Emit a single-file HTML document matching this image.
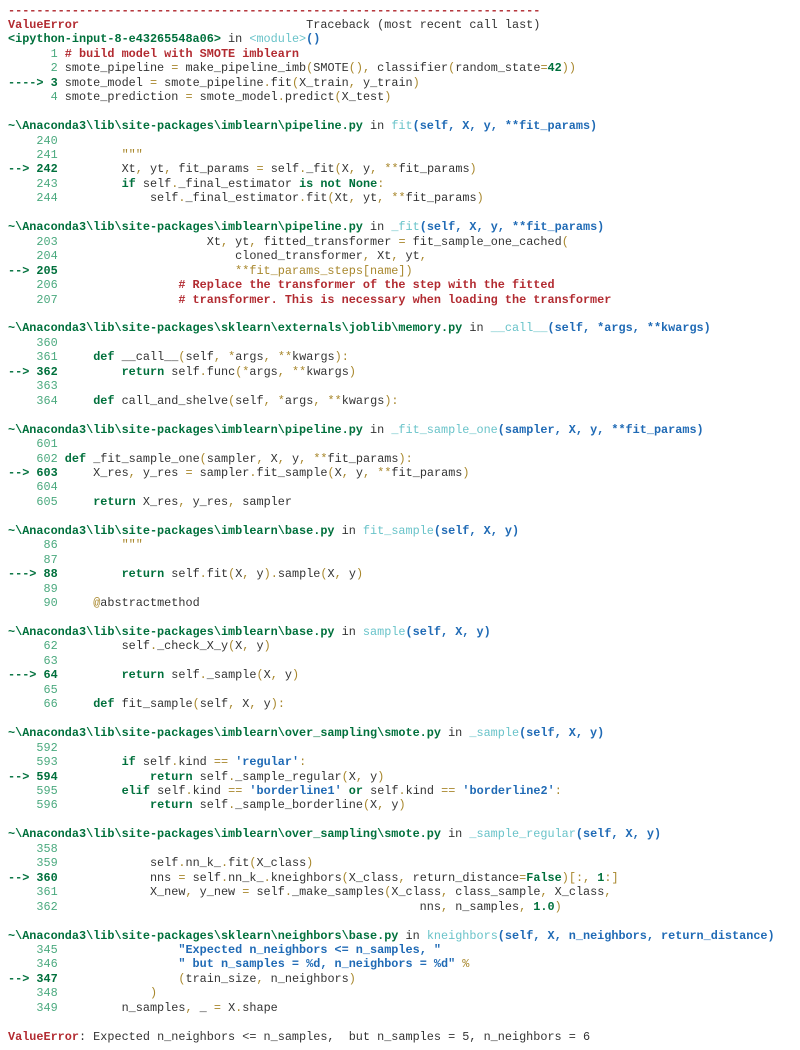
<!DOCTYPE html>
<html><head><meta charset="utf-8"><style>
html,body{margin:0;padding:0;background:#fff;width:800px;height:1050px;overflow:hidden}
pre{margin:0;position:absolute;left:8px;top:3.5px;font-family:"Liberation Mono",monospace;font-size:11.83px;line-height:14.46px;color:#333;white-space:pre}
.r{color:#b22b31;font-weight:bold}
.g{color:#00703c;font-weight:bold}
.n{color:#4aa97e}
.b{color:#1f6ab5;font-weight:bold}
.c{color:#69c3c9}
.o{color:#a8872c}
.a{color:#00703c;font-weight:bold}
</style></head><body><pre><span class="r">---------------------------------------------------------------------------</span>
<span class="r">ValueError</span>                                Traceback (most recent call last)
<span class="g">&lt;ipython-input-8-e43265548a06&gt;</span> in <span class="c">&lt;module&gt;</span><span class="b">()</span>
<span class="n">      1</span> <span class="r"># build model with SMOTE imblearn</span>
<span class="n">      2</span> smote_pipeline <span class="o">=</span> make_pipeline_imb<span class="o">(</span>SMOTE<span class="o">(),</span> classifier<span class="o">(</span>random_state<span class="o">=</span><span class="a">42</span><span class="o">))</span>
<span class="a">----&gt; 3</span> smote_model <span class="o">=</span> smote_pipeline<span class="o">.</span>fit<span class="o">(</span>X_train<span class="o">,</span> y_train<span class="o">)</span>
<span class="n">      4</span> smote_prediction <span class="o">=</span> smote_model<span class="o">.</span>predict<span class="o">(</span>X_test<span class="o">)</span>

<span class="g">~\Anaconda3\lib\site-packages\imblearn\pipeline.py</span> in <span class="c">fit</span><span class="b">(self, X, y, **fit_params)</span>
<span class="n">    240</span> 
<span class="n">    241</span>         <span class="o">"""</span>
<span class="a">--&gt; 242</span>         Xt<span class="o">,</span> yt<span class="o">,</span> fit_params <span class="o">=</span> self<span class="o">.</span>_fit<span class="o">(</span>X<span class="o">,</span> y<span class="o">,</span> <span class="o">**</span>fit_params<span class="o">)</span>
<span class="n">    243</span>         <span class="a">if</span> self<span class="o">.</span>_final_estimator <span class="a">is</span> <span class="a">not</span> <span class="a">None</span><span class="o">:</span>
<span class="n">    244</span>             self<span class="o">.</span>_final_estimator<span class="o">.</span>fit<span class="o">(</span>Xt<span class="o">,</span> yt<span class="o">,</span> <span class="o">**</span>fit_params<span class="o">)</span>

<span class="g">~\Anaconda3\lib\site-packages\imblearn\pipeline.py</span> in <span class="c">_fit</span><span class="b">(self, X, y, **fit_params)</span>
<span class="n">    203</span>                     Xt<span class="o">,</span> yt<span class="o">,</span> fitted_transformer <span class="o">=</span> fit_sample_one_cached<span class="o">(</span>
<span class="n">    204</span>                         cloned_transformer<span class="o">,</span> Xt<span class="o">,</span> yt<span class="o">,</span>
<span class="a">--&gt; 205</span>                         <span class="o">**</span><span class="o">fit_params_steps[name])</span>
<span class="n">    206</span>                 <span class="r"># Replace the transformer of the step with the fitted</span>
<span class="n">    207</span>                 <span class="r"># transformer. This is necessary when loading the transformer</span>

<span class="g">~\Anaconda3\lib\site-packages\sklearn\externals\joblib\memory.py</span> in <span class="c">__call__</span><span class="b">(self, *args, **kwargs)</span>
<span class="n">    360</span> 
<span class="n">    361</span>     <span class="a">def</span> __call__<span class="o">(</span>self<span class="o">,</span> <span class="o">*</span>args<span class="o">,</span> <span class="o">**</span>kwargs<span class="o">):</span>
<span class="a">--&gt; 362</span>         <span class="a">return</span> self<span class="o">.</span>func<span class="o">(*</span>args<span class="o">,</span> <span class="o">**</span>kwargs<span class="o">)</span>
<span class="n">    363</span> 
<span class="n">    364</span>     <span class="a">def</span> call_and_shelve<span class="o">(</span>self<span class="o">,</span> <span class="o">*</span>args<span class="o">,</span> <span class="o">**</span>kwargs<span class="o">):</span>

<span class="g">~\Anaconda3\lib\site-packages\imblearn\pipeline.py</span> in <span class="c">_fit_sample_one</span><span class="b">(sampler, X, y, **fit_params)</span>
<span class="n">    601</span> 
<span class="n">    602</span> <span class="a">def</span> _fit_sample_one<span class="o">(</span>sampler<span class="o">,</span> X<span class="o">,</span> y<span class="o">,</span> <span class="o">**</span>fit_params<span class="o">):</span>
<span class="a">--&gt; 603</span>     X_res<span class="o">,</span> y_res <span class="o">=</span> sampler<span class="o">.</span>fit_sample<span class="o">(</span>X<span class="o">,</span> y<span class="o">,</span> <span class="o">**</span>fit_params<span class="o">)</span>
<span class="n">    604</span> 
<span class="n">    605</span>     <span class="a">return</span> X_res<span class="o">,</span> y_res<span class="o">,</span> sampler

<span class="g">~\Anaconda3\lib\site-packages\imblearn\base.py</span> in <span class="c">fit_sample</span><span class="b">(self, X, y)</span>
<span class="n">     86</span>         <span class="o">"""</span>
<span class="n">     87</span> 
<span class="a">---&gt; 88</span>         <span class="a">return</span> self<span class="o">.</span>fit<span class="o">(</span>X<span class="o">,</span> y<span class="o">).</span>sample<span class="o">(</span>X<span class="o">,</span> y<span class="o">)</span>
<span class="n">     89</span> 
<span class="n">     90</span>     <span class="o">@</span>abstractmethod

<span class="g">~\Anaconda3\lib\site-packages\imblearn\base.py</span> in <span class="c">sample</span><span class="b">(self, X, y)</span>
<span class="n">     62</span>         self<span class="o">.</span>_check_X_y<span class="o">(</span>X<span class="o">,</span> y<span class="o">)</span>
<span class="n">     63</span> 
<span class="a">---&gt; 64</span>         <span class="a">return</span> self<span class="o">.</span>_sample<span class="o">(</span>X<span class="o">,</span> y<span class="o">)</span>
<span class="n">     65</span> 
<span class="n">     66</span>     <span class="a">def</span> fit_sample<span class="o">(</span>self<span class="o">,</span> X<span class="o">,</span> y<span class="o">):</span>

<span class="g">~\Anaconda3\lib\site-packages\imblearn\over_sampling\smote.py</span> in <span class="c">_sample</span><span class="b">(self, X, y)</span>
<span class="n">    592</span> 
<span class="n">    593</span>         <span class="a">if</span> self<span class="o">.</span>kind <span class="o">==</span> <span class="b">'regular'</span><span class="o">:</span>
<span class="a">--&gt; 594</span>             <span class="a">return</span> self<span class="o">.</span>_sample_regular<span class="o">(</span>X<span class="o">,</span> y<span class="o">)</span>
<span class="n">    595</span>         <span class="a">elif</span> self<span class="o">.</span>kind <span class="o">==</span> <span class="b">'borderline1'</span> <span class="a">or</span> self<span class="o">.</span>kind <span class="o">==</span> <span class="b">'borderline2'</span><span class="o">:</span>
<span class="n">    596</span>             <span class="a">return</span> self<span class="o">.</span>_sample_borderline<span class="o">(</span>X<span class="o">,</span> y<span class="o">)</span>

<span class="g">~\Anaconda3\lib\site-packages\imblearn\over_sampling\smote.py</span> in <span class="c">_sample_regular</span><span class="b">(self, X, y)</span>
<span class="n">    358</span> 
<span class="n">    359</span>             self<span class="o">.</span>nn_k_<span class="o">.</span>fit<span class="o">(</span>X_class<span class="o">)</span>
<span class="a">--&gt; 360</span>             nns <span class="o">=</span> self<span class="o">.</span>nn_k_<span class="o">.</span>kneighbors<span class="o">(</span>X_class<span class="o">,</span> return_distance<span class="o">=</span><span class="a">False</span><span class="o">)[:,</span> <span class="a">1</span><span class="o">:]</span>
<span class="n">    361</span>             X_new<span class="o">,</span> y_new <span class="o">=</span> self<span class="o">.</span>_make_samples<span class="o">(</span>X_class<span class="o">,</span> class_sample<span class="o">,</span> X_class<span class="o">,</span>
<span class="n">    362</span>                                                   nns<span class="o">,</span> n_samples<span class="o">,</span> <span class="a">1.0</span><span class="o">)</span>

<span class="g">~\Anaconda3\lib\site-packages\sklearn\neighbors\base.py</span> in <span class="c">kneighbors</span><span class="b">(self, X, n_neighbors, return_distance)</span>
<span class="n">    345</span>                 <span class="b">"Expected n_neighbors &lt;= n_samples, "</span>
<span class="n">    346</span>                 <span class="b">" but n_samples = %d, n_neighbors = %d"</span> <span class="o">%</span>
<span class="a">--&gt; 347</span>                 <span class="o">(</span>train_size<span class="o">,</span> n_neighbors<span class="o">)</span>
<span class="n">    348</span>             <span class="o">)</span>
<span class="n">    349</span>         n_samples<span class="o">,</span> _ <span class="o">=</span> X<span class="o">.</span>shape

<span class="r">ValueError</span>: Expected n_neighbors &lt;= n_samples,  but n_samples = 5, n_neighbors = 6</pre></body></html>
